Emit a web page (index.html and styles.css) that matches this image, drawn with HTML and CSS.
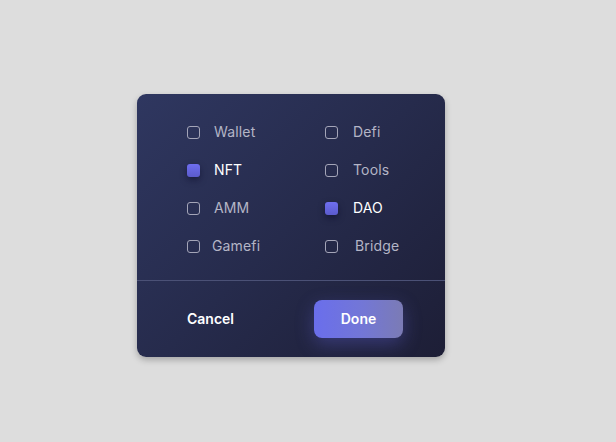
FILE: index.html
```html
<!DOCTYPE html>
<html>
<head>
<meta charset="utf-8">
<link rel="stylesheet" href="styles.css">
</head>
<body>
<div class="card">
  <div class="options">
    <label class="opt"><span class="box"></span><span class="txt">Wallet</span></label>
    <label class="opt"><span class="box"></span><span class="txt r">Defi</span></label>
    <label class="opt on"><span class="box"></span><span class="txt">NFT</span></label>
    <label class="opt"><span class="box"></span><span class="txt r">Tools</span></label>
    <label class="opt"><span class="box"></span><span class="txt">AMM</span></label>
    <label class="opt on"><span class="box"></span><span class="txt r">DAO</span></label>
    <label class="opt"><span class="box"></span><span class="txt tight">Gamefi</span></label>
    <label class="opt"><span class="box"></span><span class="txt wide">Bridge</span></label>
  </div>
  <div class="footer">
    <span class="cancel">Cancel</span>
    <span class="done">Done</span>
  </div>
</div>
</body>
</html>
```
FILE: styles.css
```css
html, body { margin: 0; padding: 0; }
body {
  width: 616px; height: 442px;
  background: #dddddd;
  font-family: "Inter", "Noto Sans", sans-serif;
  box-sizing: border-box;
  padding: 94px 0 0 137px;
}
.card {
  width: 308px; height: 263px;
  border-radius: 9px;
  background: linear-gradient(135deg, #2f3760 0%, #262b4c 50%, #1d1e36 100%);
  box-shadow: 0 3px 6px rgba(0,0,0,0.25);
  display: flex; flex-direction: column;
  overflow: hidden;
}
.options {
  height: 187px;
  box-sizing: border-box;
  padding: 19px 0 0 50px;
  display: grid;
  grid-template-columns: 138px 120px;
  grid-auto-rows: 38px;
  border-bottom: 1px solid #4b5176;
}
.opt { display: flex; align-items: center; }
.box {
  width: 13px; height: 13px; box-sizing: border-box;
  border: 1.5px solid #a4a5b8; border-radius: 3px;
  flex: none;
}
.opt.on .box {
  border: none;
  background: linear-gradient(180deg, #6e6ef0, #5b5bcc);
  box-shadow: 0 3px 6px rgba(10,10,40,0.5);
}
.txt {
  margin-left: 14px;
  font-size: 14px; line-height: 18px; color: #b4b5c6; letter-spacing: 0.15px;
}
.txt.r { margin-left: 15px; }
.txt.tight { margin-left: 12px; }
.txt.wide { margin-left: 17px; }
.opt.on .txt { color: #ffffff; }
.footer {
  flex: 1;
  display: flex; align-items: center; justify-content: space-between;
  padding: 0 42px 0 50px;
}
.cancel { color: #ffffff; font-weight: 600; font-size: 14px; line-height: 18px; margin-top: -1px; }
.done {
  width: 89px; height: 38px; border-radius: 8px;
  box-sizing: border-box; padding-bottom: 2px;
  display: flex; align-items: center; justify-content: center;
  color: #ffffff; font-weight: 600; font-size: 14px;
  background: linear-gradient(90deg, #6a6eec 0%, #7377d6 55%, #7b7bb5 100%);
  box-shadow: 0 6px 18px rgba(100,100,220,0.35);
}
```
